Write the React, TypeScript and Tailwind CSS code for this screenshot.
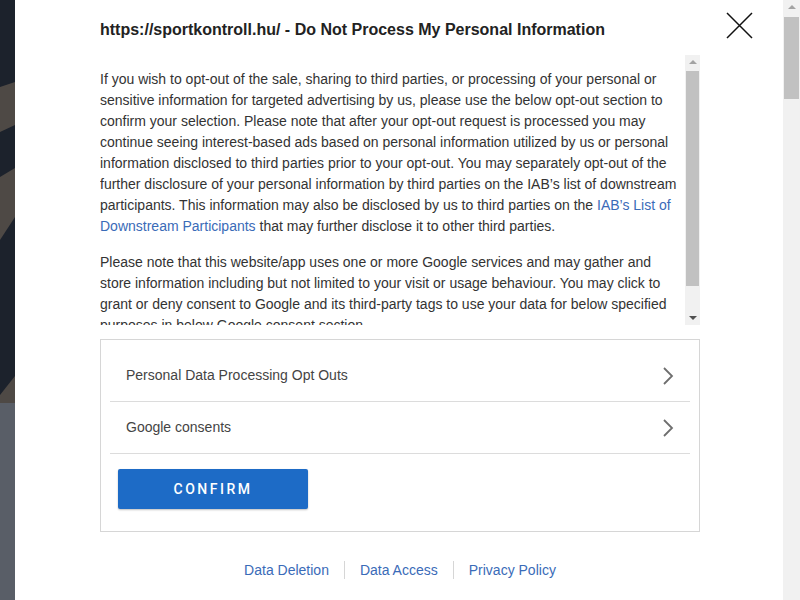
import React from "react";

const Chevron = () => (
  <svg width="12" height="20" viewBox="0 0 12 20" className="text-[#6e6e6e]">
    <path d="M2 2 L10 10 L2 18" fill="none" stroke="currentColor" strokeWidth="1.8" />
  </svg>
);

const FakeScrollbar = ({ thumbTop, thumbHeight, arrows }: { thumbTop: number; thumbHeight: number; arrows: boolean }) => (
  <div className="relative h-full w-full bg-[#f1f1f1]">
    <div className="absolute left-1/2 top-[5px] h-0 w-0 -translate-x-1/2 border-x-[4px] border-b-[4px] border-x-transparent border-b-[#a3a3a3]" />
    <div className="absolute left-[1px] right-[1px] bg-[#c1c1c1]" style={{ top: thumbTop, height: thumbHeight }} />
    {arrows && (
      <div className="absolute bottom-[5px] left-1/2 h-0 w-0 -translate-x-1/2 border-x-[4px] border-t-[4px] border-x-transparent border-t-[#505050]" />
    )}
  </div>
);

export default function App() {
  return (
    <div className="flex h-[600px] w-[800px] overflow-hidden bg-white font-['Liberation_Sans',Arial,sans-serif]">
      {/* page behind the modal */}
      <div className="flex w-[15px] shrink-0 flex-col">
        <svg width="15" height="403" viewBox="0 0 15 403" className="block">
          <rect width="15" height="403" fill="#1c222c" />
          <polygon points="0,87 15,82 15,125 0,132" fill="#4e4945" />
          <polygon points="0,177 15,168 15,217 0,240" fill="#4e4945" />
          <polygon points="0,395 15,376 15,403 0,403" fill="#4e4945" />
        </svg>
        <div className="flex-1 bg-[#595e67]" />
      </div>

      {/* modal */}
      <div className="relative flex-1 pl-[85px] pt-[20px]">
        <button className="absolute left-[711px] top-[12px] h-[27px] w-[27px]">
          <svg width="27" height="27" viewBox="0 0 27 27">
            <path d="M1 1 L26 26 M26 1 L1 26" stroke="#111" strokeWidth="1.5" />
          </svg>
        </button>

        <h1 className="text-[16px] font-bold leading-[20px] text-[#222]">
          https://sportkontroll.hu/ - Do Not Process My Personal Information
        </h1>

        <div className="mt-[15px] flex h-[270px] w-[600px]">
          <div className="w-[585px] overflow-hidden pt-[14px] text-[14px] leading-[21px] text-[#333]">
            <p>
              If you wish to opt-out of the sale, sharing to third parties, or processing of your personal or sensitive
              information for targeted advertising by us, please use the below opt-out section to confirm your selection.
              Please note that after your opt-out request is processed you may continue seeing interest-based ads based
              on personal information utilized by us or personal information disclosed to third parties prior to your
              opt-out. You may separately opt-out of the further disclosure of your personal information by third parties
              on the IAB’s list of downstream participants. This information may also be disclosed by us to third parties
              on the <span className="text-[#3a6bb8]">IAB’s List of Downstream Participants</span> that may further
              disclose it to other third parties.
            </p>
            <p className="mt-[15px]">
              Please note that this website/app uses one or more Google services and may gather and store information
              including but not limited to your visit or usage behaviour. You may click to grant or deny consent to
              Google and its third-party tags to use your data for below specified purposes in below Google consent
              section.
            </p>
          </div>
          <div className="w-[15px]">
            <FakeScrollbar thumbTop={16} thumbHeight={215} arrows />
          </div>
        </div>

        <div className="mt-[14px] h-[193px] w-[600px] border border-[#d6d6d6] px-[9px] pt-[10px]">
          <div className="flex h-[52px] items-center justify-between border-b border-[#dcdcdc] pl-[16px] pr-[16px] text-[14px] text-[#444]">
            <span>Personal Data Processing Opt Outs</span>
            <Chevron />
          </div>
          <div className="flex h-[52px] items-center justify-between border-b border-[#dcdcdc] pl-[16px] pr-[16px] text-[14px] text-[#444]">
            <span>Google consents</span>
            <Chevron />
          </div>
          <button className="ml-[8px] mt-[15px] h-[40px] w-[190px] rounded-[2px] bg-[#1d6bc6] font-['Roboto',sans-serif] text-[14px] font-medium tracking-[2.5px] text-white shadow-[0_1px_2px_rgba(0,0,0,0.25)]">
            CONFIRM
          </button>
        </div>

        <div className="mt-[29px] flex w-[600px] items-center justify-center text-[14px] leading-[18px] text-[#3a6bb8]">
          <span className="pr-[15px]">Data Deletion</span>
          <span className="border-l border-[#d6d6d6] px-[15px]">Data Access</span>
          <span className="border-l border-[#d6d6d6] pl-[15px]">Privacy Policy</span>
        </div>
      </div>

      {/* page scrollbar */}
      <div className="w-[17px] shrink-0">
        <FakeScrollbar thumbTop={17} thumbHeight={82} arrows={false} />
      </div>
    </div>
  );
}
